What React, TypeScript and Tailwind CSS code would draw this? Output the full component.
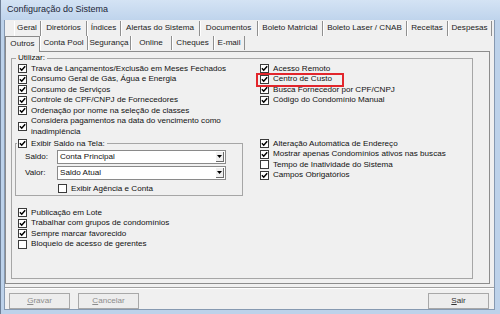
import type { ReactNode } from 'react'

const row1: [string, number][] = [
  ['Geral', 27],
  ['Diretórios', 46],
  ['Índices', 34],
  ['Alertas do Sistema', 79],
  ['Documentos', 58],
  ['Boleto Matricial', 65],
  ['Boleto Laser / CNAB', 84],
  ['Receitas', 41],
  ['Despesas', 44],
]

const row2: [string, number][] = [
  ['Conta Pool', 48],
  ['Segurança', 43],
  ['Online', 41],
  ['Cheques', 42],
  ['E-mail', 31],
]

function Check({ on }: { on?: boolean }) {
  return (
    <span className="flex h-[9px] w-[9px] shrink-0 items-center justify-center border border-[#3a3a3a] bg-white">
      {on && (
        <svg width="7" height="7" viewBox="0 0 7 7">
          <path d="M0.9 3.3 L2.7 5.2 L6.2 1.2" fill="none" stroke="#000" strokeWidth="1.5" />
        </svg>
      )}
    </span>
  )
}

function Opt({ on, children, className = '' }: { on?: boolean; children: ReactNode; className?: string }) {
  return (
    <div className={`relative flex h-[10.5px] items-center ${className}`}>
      <Check on={on} />
      <span className="ml-[4px] whitespace-nowrap leading-[10.5px]">{children}</span>
    </div>
  )
}

function Combo({ value }: { value: string }) {
  return (
    <div className="flex h-[14px] w-[169px] items-center border border-[#8a8a8a] bg-white pl-[2px]">
      <span className="flex-1 leading-[10px]">{value}</span>
      <span className="mr-[1px] flex h-[10px] w-[8px] items-center justify-center border-r border-b border-[#6b6b6b] bg-[#f0f0f0]">
        <svg width="5" height="3" viewBox="0 0 5 3">
          <path d="M0 0h5L2.5 3z" fill="#000" />
        </svg>
      </span>
    </div>
  )
}

function Btn({ children, dim }: { children: ReactNode; dim?: boolean }) {
  return (
    <div
      className={`flex h-[16px] w-[61px] items-center justify-center border border-[#a8a8a8] bg-[#ededed] ${
        dim ? 'text-[#8c8c8c]' : 'text-[#333]'
      }`}
    >
      {children}
    </div>
  )
}

export default function App() {
  return (
    <div className="flex h-[314px] w-[500px] flex-col overflow-hidden border-l border-[#6f8097] bg-[#bdd2ea] font-['Liberation_Sans',Arial,sans-serif] text-[8.1px] text-[#111]">
      {/* Title bar */}
      <div className="flex h-[20px] shrink-0 items-center bg-gradient-to-b from-[#d4e3f4] to-[#bfd4ec] pl-[6px] text-[9px] text-[#1b2436]">
        Configuração do Sistema
      </div>

      <div className="flex flex-1">
        <div className="w-[3px]" />
        {/* Client area */}
        <div className="flex h-[290px] w-[491px] flex-col border-x border-b border-[#8699b1] bg-[#f0f0f0]">
          {/* Tab row 1 */}
          <div className="mt-[1px] flex h-[15px] pl-[9px] text-[#222]">
            {row1.map(([t, w]) => (
              <div
                key={t}
                style={{ width: w }}
                className="flex items-center justify-center border-r border-[#8f8f8f] shadow-[inset_1px_0_0_#fff]"
              >
                {t}
              </div>
            ))}
          </div>
          {/* Tab row 2 */}
          <div className="flex h-[15px] text-[#222]">
            <div className="relative z-10 -mb-[1px] flex h-[16px] w-[35px] items-center justify-center border-x border-t border-[#8a8a8a] bg-[#f0f0f0]">
              Outros
            </div>
            {row2.map(([t, w]) => (
              <div
                key={t}
                style={{ width: w }}
                className="flex h-[14px] items-center justify-center border-r border-[#8f8f8f] shadow-[inset_1px_0_0_#fff]"
              >
                {t}
              </div>
            ))}
          </div>

          {/* Tab panel */}
          <div className="mr-[4px] h-[233px] border border-[#8c8c8c] pl-[5px] pt-[1px]">
            <fieldset className="h-[226px] w-[462px] border border-[#a6a6a6] pl-[3px]">
              <legend className="ml-[1px] px-[2px] leading-[10.5px]">Utilizar:</legend>
              <div className="flex">
                {/* Left column */}
                <div className="w-[245px]">
                  <Opt on className="pl-[3px]">Trava de Lançamentos/Exclusão em Meses Fechados</Opt>
                  <Opt on className="pl-[3px]">Consumo Geral de Gás, Água e Energia</Opt>
                  <Opt on className="pl-[3px]">Consumo de Serviços</Opt>
                  <Opt on className="pl-[3px]">Controle de CPF/CNPJ de Fornecedores</Opt>
                  <Opt on className="pl-[3px]">Ordenação por nome na seleção de classes</Opt>
                  <div className="flex items-center pl-[3px]">
                    <Check on />
                    <span className="ml-[4px] leading-[10.5px]">
                      Considera pagamentos na data do vencimento como
                      <br />
                      inadimplência
                    </span>
                  </div>

                  <fieldset className="mt-[1.5px] w-[228px] border border-[#a6a6a6] pb-[1px]">
                    <legend className="ml-[1px] px-[1px]">
                      <div className="flex h-[10.5px] items-center pr-[1px]">
                        <Check on />
                        <span className="ml-[4px] leading-[10.5px]">Exibir Saldo na Tela:</span>
                      </div>
                    </legend>
                    <div className="mt-[1px] flex items-center pl-[9px]">
                      <span className="w-[32px]">Saldo:</span>
                      <Combo value="Conta Principal" />
                    </div>
                    <div className="mt-[2px] flex items-center pl-[9px]">
                      <span className="w-[32px]">Valor:</span>
                      <Combo value="Saldo Atual" />
                    </div>
                    <Opt className="mt-[3.5px] pl-[42px]">Exibir Agência e Conta</Opt>
                  </fieldset>

                  <div className="mt-[11.5px]">
                    <Opt on className="pl-[3px]">Publicação em Lote</Opt>
                    <Opt on className="pl-[3px]">Trabalhar com grupos de condomínios</Opt>
                    <Opt on className="pl-[3px]">Sempre marcar favorecido</Opt>
                    <Opt className="pl-[3px]">Bloqueio de acesso de gerentes</Opt>
                  </div>
                </div>

                {/* Right column */}
                <div>
                  <Opt on>Acesso Remoto</Opt>
                  <Opt on>
                    Centro de Custo
                    <span className="absolute -left-[4px] -top-[1.5px] z-10 h-[14.5px] w-[88px] border-2 border-[#e2262c]" />
                  </Opt>
                  <Opt on>Busca Fornecedor por CPF/CNPJ</Opt>
                  <Opt on>Código do Condomínio Manual</Opt>
                  <div className="mt-[33px]">
                    <Opt on>Alteração Automática de Endereço</Opt>
                    <Opt on>Mostrar apenas Condomínios ativos nas buscas</Opt>
                    <Opt>Tempo de Inatividade do Sistema</Opt>
                    <Opt on>Campos Obrigatórios</Opt>
                  </div>
                </div>
              </div>
            </fieldset>
          </div>

          {/* Separator */}
          <div className="mt-[3px] h-[2px] border-t border-[#a0a0a0] bg-white" />

          {/* Buttons */}
          <div className="mt-[4px] flex px-[4px] pr-[5px]">
            <Btn dim>
              <span className="underline">G</span>ravar
            </Btn>
            <div className="ml-[8px]">
              <Btn dim>
                <span className="underline">C</span>ancelar
              </Btn>
            </div>
            <div className="ml-auto">
              <Btn>
                <span className="underline">S</span>air
              </Btn>
            </div>
          </div>
        </div>
      </div>
    </div>
  )
}
